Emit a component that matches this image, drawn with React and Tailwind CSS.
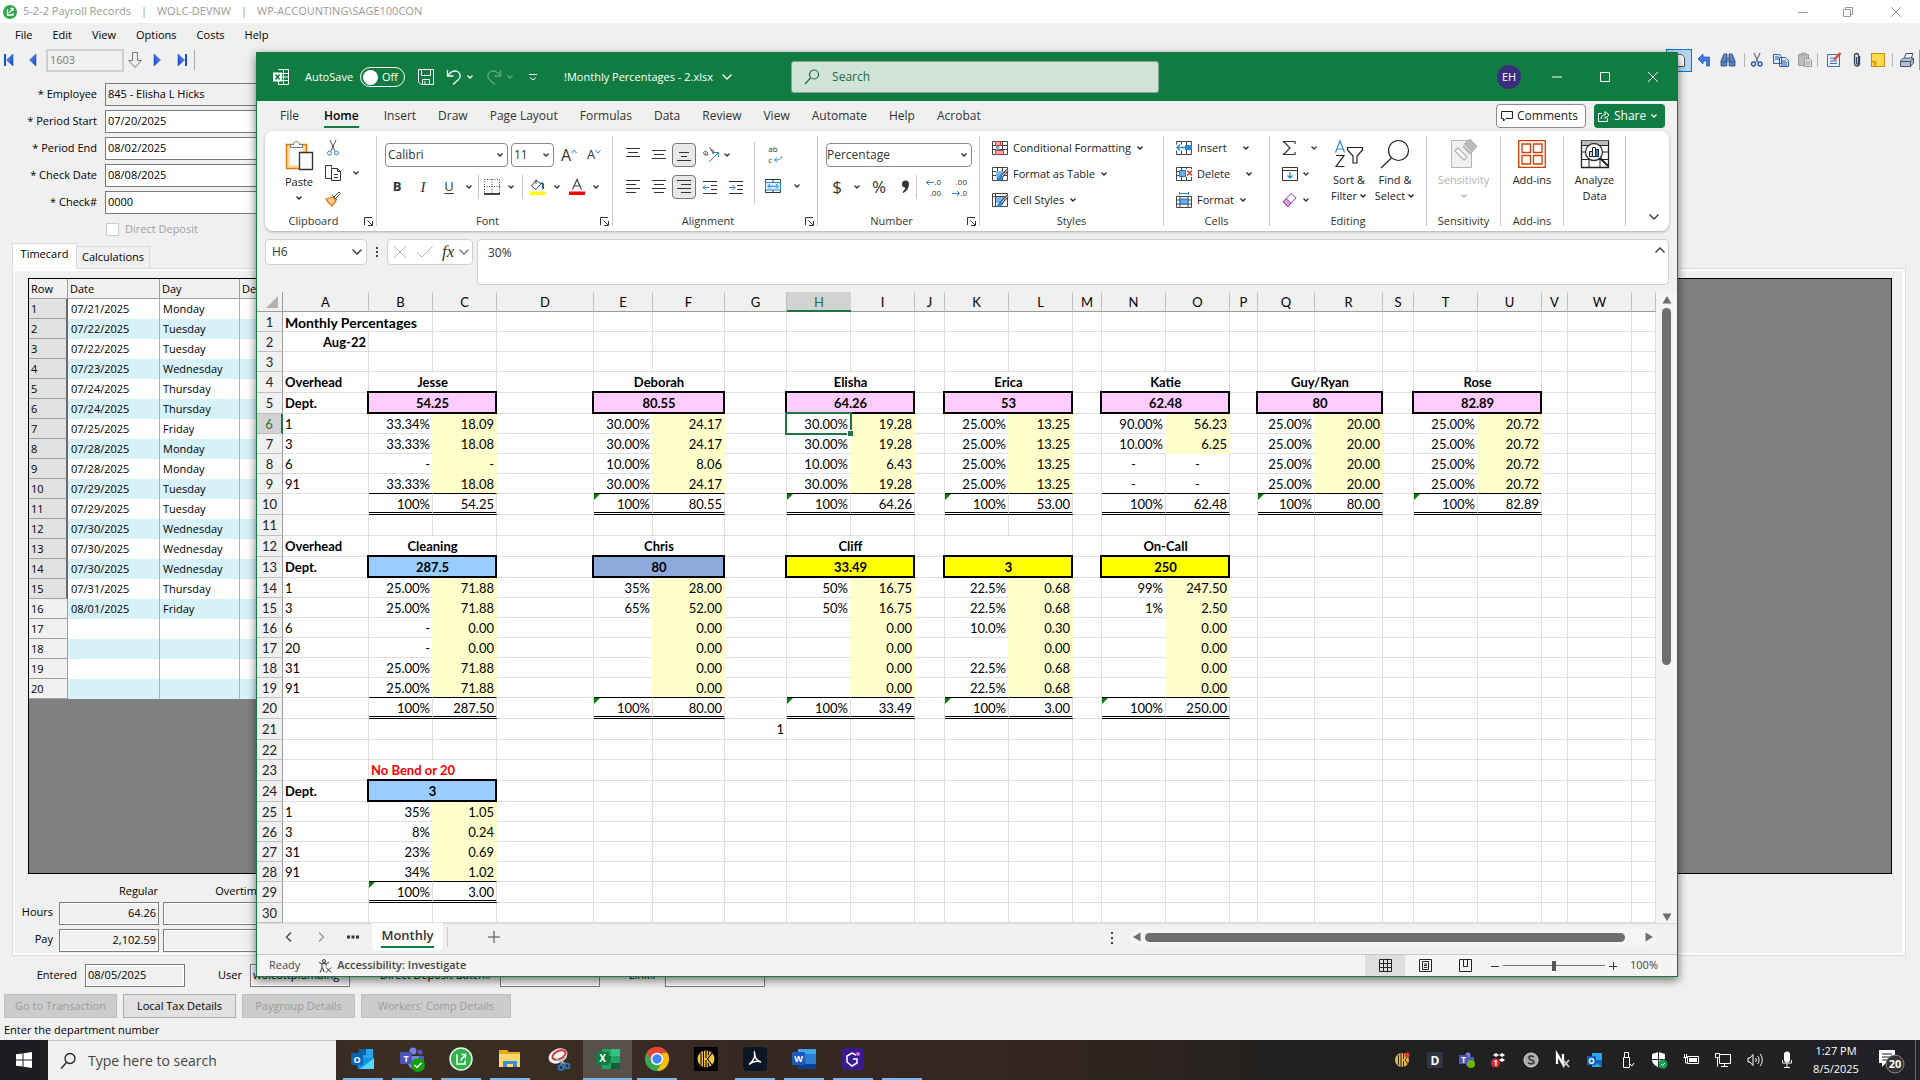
import React from "react";

/* ---------- shared pieces ---------- */

function Svg({ w = 16, h, box, className = "", children, ...rest }) {
  return (
    <svg
      width={w}
      height={h || w}
      viewBox={box || `0 0 ${w} ${h || w}`}
      fill="none"
      stroke="currentColor"
      aria-hidden="true"
      className={"block shrink-0 overflow-visible " + className}
      {...rest}
    >
      {children}
    </svg>
  );
}

const Chev = ({ className = "" }) => (
  <Svg w={8} className={className} strokeWidth="1.3">
    <path d="M1.5 2.5 4 5l2.5-2.5" />
  </Svg>
);

const BigChev = ({ className = "" }) => (
  <Svg w={12} className={className} strokeWidth="1.3">
    <path d="M1.5 3.5 6 8l4.5-4.5" />
  </Svg>
);

function Btn({ label, className = "", children, ...rest }) {
  return (
    <button type="button" aria-label={label} className={"flex shrink-0 items-center justify-center " + className} {...rest}>
      {children}
    </button>
  );
}

function Select({ label, value, className = "", selectClass = "", chev }) {
  return (
    <div className={"relative " + className}>
      <select aria-label={label} defaultValue={value} className={"h-full w-full appearance-none bg-white outline-none " + selectClass}>
        <option>{value}</option>
      </select>
      <span className="pointer-events-none absolute inset-y-0 right-1 flex items-center">{chev || <Chev />}</span>
    </div>
  );
}

/* ---------- payroll window ---------- */

const timecard = [
  ["07/21/2025", "Monday"],
  ["07/22/2025", "Tuesday"],
  ["07/22/2025", "Tuesday"],
  ["07/23/2025", "Wednesday"],
  ["07/24/2025", "Thursday"],
  ["07/24/2025", "Thursday"],
  ["07/25/2025", "Friday"],
  ["07/28/2025", "Monday"],
  ["07/28/2025", "Monday"],
  ["07/29/2025", "Tuesday"],
  ["07/29/2025", "Tuesday"],
  ["07/30/2025", "Wednesday"],
  ["07/30/2025", "Wednesday"],
  ["07/30/2025", "Wednesday"],
  ["07/31/2025", "Thursday"],
  ["08/01/2025", "Friday"],
  ["", ""],
  ["", ""],
  ["", ""],
  ["", ""],
];

const NavArrow = ({ flip, bar }) => (
  <Svg w={12} className={flip ? "-scale-x-100" : ""} stroke="none">
    <defs>
      <linearGradient id="nav" x1="0" x2="1" y1="0" y2="1">
        <stop offset="0" stopColor="#6f9bf5" />
        <stop offset="1" stopColor="#0a3bbf" />
      </linearGradient>
    </defs>
    {bar && <rect x="1" y="0" width="2" height="12" fill="#1c4fd0" />}
    <path d="M10 0v12L3.500 6z" fill="url(#nav)" stroke="#2a5bd8" strokeWidth=".6" />
  </Svg>
);

const ToolSep = () => <span className="mx-1 h-3.5 w-px bg-[#b5b5b5]" />;

function PayrollToolbar() {
  return (
    <div className="flex h-[26px] shrink-0 items-center">
      <Btn label="First record" className="w-[18px]"><NavArrow bar /></Btn>
      <Btn label="Previous record" className="w-7"><NavArrow /></Btn>
      <input aria-label="Record number" readOnly defaultValue="1603" className="h-[23px] w-[78px] border-2 border-[#cfcfcf] bg-[#f0f0f0] px-0.5 pb-0.5 text-[#7d7d7d] outline-none" />
      <Btn label="Go to record" className="w-[22px]">
        <Svg w={16} h={18} className="text-[#777]">
          <path d="M5.500 1.500h5v8h4L8 16.500 1.500 9.500h4z" fill="#eee" />
        </Svg>
      </Btn>
      <Btn label="Next record" className="w-6"><NavArrow flip /></Btn>
      <Btn label="Last record" className="w-6"><NavArrow flip bar /></Btn>
      <span className="h-5 w-px bg-[#a9a9a9]" />
      <div className="ml-auto flex items-center">
        <Btn label="New" className="h-[23px] w-[26px] border border-[#0078d7] bg-[#b5d7f3]">
          <Svg w={16}>
            <path d="M4.500 2.500h6l3 3v9h-9z" fill="#fff" stroke="#555" />
            <path d="M4 1l1 2 2-.5-1 2 1 2-2-.5-1 2-1-2-2 .5 1-2-1-2 2 .5z" fill="#f6c945" stroke="none" />
          </Svg>
        </Btn>
        <Btn label="Undo" className="w-6">
          <Svg w={14} stroke="none"><path d="M1 6 6 1v3h6.500v9H9.500V8H6v3z" fill="#3f7ae0" stroke="#1b4fb5" strokeWidth=".7" /></Svg>
        </Btn>
        <Btn label="Find" className="w-6">
          <Svg w={16} stroke="#24406e" strokeWidth=".8">
            <path d="M4 2h3v4l-.2 8H1V9zM12 2H9v4l.2 8H15V9z" fill="#5a86c9" />
            <path d="M2 10h4M10 10h4M7 6h2v3H7z" fill="#cfe0f7" />
          </Svg>
        </Btn>
        <ToolSep />
        <Btn label="Cut" className="w-4">
          <Svg w={14} strokeWidth="1.4" stroke="#6d7c91"><path d="M4 0l4 9M10 0 6 9" /><circle cx="3.500" cy="11" r="2" stroke="#2557c5" /><circle cx="10" cy="11" r="2" stroke="#2557c5" /></Svg>
        </Btn>
        <Btn label="Copy" className="w-8">
          <Svg w={16} stroke="#2f5fae" strokeWidth="1"><path d="M.5 2.500h6l2 2v7h-8zM6.500 5.500h6l3 3v6h-9z" fill="#dbe9fb" /><path d="M8 9h5M8 11h6M8 13h6M2 5h4M2 7h4" /></Svg>
        </Btn>
        <Btn label="Paste" className="w-4">
          <Svg w={16} stroke="#9a9a9a"><path d="M1.500 2.500h10v11h-10z" fill="#bdbdbd" /><path d="M4.500 1h4v2h-4z" fill="#ccc" /><path d="M7.500 6.500h5l2 2v6h-7z" fill="#ddd" /><path d="M9 10h4M9 12h4" /></Svg>
        </Btn>
        <ToolSep />
        <Btn label="Edit note" className="w-6">
          <Svg w={16} stroke="#3d6cb8"><path d="M1.500 2.500h12v12h-12z" fill="#e9f1fc" /><path d="M4 6h5M4 9h7M4 11.500h7" /><path d="M14.500 1 8 8" stroke="#e34a26" strokeWidth="2.500" /></Svg>
        </Btn>
        <Btn label="Attach" className="w-[22px]">
          <Svg w={10} h={16} stroke="#33435c" strokeWidth="1.300"><path d="M7.500 4v7.500a2.500 2.500 0 0 1-5 0V3.500a2 2 0 0 1 4 0V11a1 1 0 0 1-2 0V5" /></Svg>
        </Btn>
        <Btn label="Note" className="w-5">
          <Svg w={14}><rect x=".5" y=".5" width="13" height="13" fill="#fbd94b" stroke="#c58f10" /><path d="M1 8l4 1-1 4" stroke="#c58f10" fill="#e8a91b" /></Svg>
        </Btn>
        <ToolSep />
        <Btn label="Print" className="w-5">
          <Svg w={16} stroke="#44536b"><path d="M5 7 7 1.500h7L12 7" fill="#fff" /><path d="M1.500 9l3-3h10v5l-3 3.500h-10z" fill="#b4c2d9" /><path d="M1.500 9.500h10v5M11.500 9.500l3-3" /></Svg>
        </Btn>
        <span className="ml-0.5 h-5 w-px bg-[#9a9a9a]" />
      </div>
    </div>
  );
}

function Field({ id, label, value, readOnly }) {
  return (
    <div className="flex h-[27px] items-start">
      <label htmlFor={id} className="w-[97px] pt-0.5 text-right leading-[18px]">{label}</label>
      <input
        id={id}
        defaultValue={value}
        readOnly={readOnly}
        className={"ml-2 h-[23px] w-[320px] border border-[#7a7a7a] px-0.5 pb-0.5 outline-none " + (readOnly ? "bg-[#f0f0f0]" : "bg-white")}
      />
    </div>
  );
}

const GrayBox = ({ label, id, value = "", className = "" }) => (
  <input id={id} aria-label={label} readOnly defaultValue={value} className={"h-[23px] w-[100px] shrink-0 border border-[#7a7a7a] bg-[#f0f0f0] px-0.5 pb-0.5 outline-none ring-1 ring-inset ring-white " + className} />
);

function PayrollWindow() {
  return (
    <section className="flex min-h-0 flex-1 flex-col overflow-hidden bg-[#f0f0f0] text-[11px] text-black">
      <header className="flex h-[23px] shrink-0 items-center bg-white text-[#999]">
        <Svg w={14} className="ml-[3px] mr-1.5" stroke="#fff" strokeWidth="1.300">
          <circle cx="7" cy="7" r="7" fill="#2fa64b" stroke="none" />
          <path d="M4.500 4v6h5.500V8M6 8l4-4M7.500 3.500H10V6" />
        </Svg>
        <h1 className="flex flex-1 gap-2.5 text-[11px]">
          <span>5-2-2 Payroll Records</span>
          <span>|</span>
          <span>WOLC-DEVNW</span>
          <span>|</span>
          <span>WP-ACCOUNTING\SAGE100CON</span>
        </h1>
        <Btn label="Minimize" className="w-[45px]"><Svg w={10}><path d="M0 5.500h10" /></Svg></Btn>
        <Btn label="Restore" className="w-[46px]"><Svg w={10}><path d="M.5 2.500h7v7h-7zM2.500 2.500v-2h7v7h-2" /></Svg></Btn>
        <Btn label="Close" className="w-[49px]"><Svg w={10}><path d="M0 0l10 10M10 0 0 10" /></Svg></Btn>
      </header>
      <nav className="flex h-6 shrink-0 items-center gap-5 pl-[15px] text-[11px]">
        {["File", "Edit", "View", "Options", "Costs", "Help"].map((m) => (
          <button type="button" key={m}>{m}</button>
        ))}
      </nav>
      <PayrollToolbar />
      <div className="pt-2.5">
        <Field id="emp" label="* Employee" value="845 - Elisha L Hicks" readOnly />
        <Field id="ps" label="* Period Start" value="07/20/2025" />
        <Field id="pe" label="* Period End" value="08/02/2025" />
        <Field id="cd" label="* Check Date" value="08/08/2025" />
        <Field id="cn" label="* Check#" value="0000" />
        <label className="ml-[106px] flex h-5 items-center gap-1.5 pt-0.5 text-[#a0a0a0]">
          <input type="checkbox" disabled className="size-[13px] appearance-none border border-[#ccc] bg-white" />
          Direct Deposit
        </label>
      </div>
      <div className="flex h-[30px] shrink-0 items-end pt-1 pl-3" role="tablist">
        <button type="button" role="tab" className="z-10 -mb-px h-[26px] w-[65px] border border-b-0 border-[#dadada] bg-white pb-1">Timecard</button>
        <button type="button" role="tab" className="h-[22px] w-[73px] border border-b-0 border-l-0 border-[#dadada]">Calculations</button>
      </div>
      <div className="mr-[14px] ml-3 flex min-h-0 flex-1 flex-col border border-[#dadada] bg-white p-0.5">
        <div className="flex min-h-0 flex-1 flex-col bg-[#f0f0f0] pt-[7px] pr-[11px] pl-[13px]">
          <div className="min-h-0 flex-1 overflow-hidden border border-black bg-[#808080]">
            <table className="w-[600px] table-fixed border-separate border-spacing-0 text-left">
              <colgroup>
                <col className="w-[39px]" />
                <col className="w-[92px]" />
                <col className="w-[80px]" />
                <col />
              </colgroup>
              <thead>
                <tr className="h-5 bg-[#f0f0f0]">
                  {["Row", "Date", "Day", "Dept"].map((h) => (
                    <th key={h} className="border-r border-b border-[#a0a0a0] px-0.5 py-0 leading-[18px] font-normal">{h}</th>
                  ))}
                </tr>
              </thead>
              <tbody>
                {timecard.map(([date, day], i) => (
                  <tr key={i} className={"h-5 " + (i % 2 ? "bg-[#d7f1f9]" : "bg-white")}>
                    <th className={"border-b border-[#a0a0a0] px-0.5 py-0 leading-[18px] font-normal " + (i < 15 ? "border-r-2 border-r-[#696969] bg-[#e1e1e1]" : "border-r bg-[#f0f0f0]")}>{i + 1}</th>
                    <td className="border-r border-[#b0b0b0] px-[3px] py-0 leading-5">{date}</td>
                    <td className="border-r border-[#b0b0b0] px-[3px] py-0 leading-5">{day}</td>
                    <td />
                  </tr>
                ))}
              </tbody>
            </table>
          </div>
          <div className="flex h-7 items-center">
            <span className="w-[130px] pt-1.5 text-right">Regular</span>
            <span className="w-[105px] pt-1.5 text-right">Overtime</span>
          </div>
          {[["Hours", "64.26", "h-[27px]"], ["Pay", "2,102.59", "h-6"]].map(([l, v, h]) => (
            <div key={l} className={"flex items-start " + h}>
              <label htmlFor={l} className="-ml-3 w-[37px] pt-0.5 text-right">{l}</label>
              <GrayBox id={l} value={v} className="mr-1 ml-1.5 text-right" />
              <GrayBox label={l + " overtime"} />
            </div>
          ))}
        </div>
      </div>
      <div className="flex h-[38px] shrink-0 items-center">
        <label htmlFor="ent" className="w-[77px] text-right">Entered</label>
        <GrayBox id="ent" value="08/05/2025" className="ml-2" />
        <label htmlFor="usr" className="w-[57px] text-right">User</label>
        <GrayBox id="usr" value="wolcottplumbing" className="ml-2" />
        <label htmlFor="ddb" className="w-[142px] text-right">Direct Deposit Batch#</label>
        <GrayBox id="ddb" className="ml-2" />
        <label htmlFor="lnk" className="w-[57px] text-right">Link#</label>
        <GrayBox id="lnk" className="ml-2" />
      </div>
      <div className="flex shrink-0 gap-1.5 pl-1">
        <button type="button" disabled className="h-6 w-[113px] border border-[#bfbfbf] bg-[#ccc] text-[#9a9a9a]">Go to Transaction</button>
        <button type="button" className="h-6 w-[113px] border border-[#adadad] bg-[#e1e1e1]">Local Tax Details</button>
        <button type="button" disabled className="h-6 w-[113px] border border-[#bfbfbf] bg-[#ccc] text-[#9a9a9a]">Paygroup Details</button>
        <button type="button" disabled className="h-6 w-[150px] border border-[#bfbfbf] bg-[#ccc] text-[#9a9a9a]">Workers' Comp Details</button>
      </div>
      <p className="h-[22px] shrink-0 pt-1 pl-1">Enter the department number</p>
    </section>
  );
}

/* ---------- Excel: title bar and tabs ---------- */

function ExcelTitle() {
  return (
    <header className="flex h-[49px] shrink-0 items-center bg-[#107c41] pt-px text-[11px] text-white">
      <Svg w={16} className="ml-4">
        <path d="M5.500 1V.5h10v15h-10V12M5.500 4.500h10M5.500 8h10M5.500 11.500h10M10.500 .5v15" />
        <rect x="0" y="3.500" width="9" height="9" fill="#fff" stroke="none" />
        <path d="M2.500 5.500l4 5M6.500 5.500l-4 5" stroke="#107c41" strokeWidth="1.500" />
      </Svg>
      <label className="ml-4 flex items-center gap-[7px]">
        AutoSave
        <span className="flex h-5 w-[45px] items-center gap-1 rounded-full border border-white pl-0.5">
          <input type="checkbox" role="switch" className="size-[15px] appearance-none rounded-full bg-white" />
          Off
        </span>
      </label>
      <Btn label="Save" className="ml-[13px]">
        <Svg w={16}><path d="M.5 .5h15v15H3l-2.500-2.500zM3.500 .5v6h9v-6M4.500 15.500v-5h7v5M7 12v3" /></Svg>
      </Btn>
      <Btn label="Undo" className="ml-3">
        <Svg w={16} strokeWidth="1.300"><path d="M1.500 1v6h6M1.800 6.700C4 3 8 1 11.500 2.500c3.500 1.800 3.500 6 .5 8.500l-5 4.500" /></Svg>
      </Btn>
      <Chev className="ml-1" />
      <Btn label="Redo" className="ml-3 text-[#5fa983]">
        <Svg w={16} strokeWidth="1.300"><path d="M14.500 1v6h-6M14.200 6.700C12 3 8 1 4.500 2.500 1 4.300 1 8.500 4 11l5 4.500" /></Svg>
      </Btn>
      <Chev className="ml-1 text-[#5fa983]" />
      <Btn label="Customize toolbar" className="ml-3.5">
        <Svg w={10}><path d="M1 2.500h8M2 5.500l3 2.500 3-2.500" /></Svg>
      </Btn>
      <span className="ml-[26px] w-[157px] text-[11px]">!Monthly Percentages - 2.xlsx</span>
      <BigChev />
      <label className="ml-[58px] flex h-8 w-[368px] shrink-0 items-center rounded-[3px] border border-[#87a592] bg-[#cfe3d8] pl-3 text-[#1c6b41]">
        <Svg w={16} strokeWidth="1.200"><circle cx="10" cy="5.500" r="4.500" /><path d="M6.500 9 1 15" /></Svg>
        <input placeholder="Search" aria-label="Search" className="ml-3 w-full bg-transparent text-[12px] outline-none placeholder:text-[#1c6b41]" />
      </label>
      <button type="button" className="ml-auto size-6 rounded-full bg-[#3b2e7e] text-[11px]">EH</button>
      <Btn label="Minimize" className="ml-3 w-12"><Svg w={10}><path d="M0 5h10" /></Svg></Btn>
      <Btn label="Maximize" className="w-12"><Svg w={10}><path d="M.5 .5h9v9h-9z" /></Svg></Btn>
      <Btn label="Close" className="w-12"><Svg w={10}><path d="M0 0l10 10M10 0 0 10" /></Svg></Btn>
    </header>
  );
}

const tabs = ["File", "Home", "Insert", "Draw", "Page Layout", "Formulas", "Data", "Review", "View", "Automate", "Help", "Acrobat"];

function ExcelTabs() {
  return (
    <nav className="flex h-[30px] shrink-0 items-end px-3 pb-[3px] text-[12px] text-[#333]">
      {tabs.map((t) => (
        <button
          type="button"
          key={t}
          className={"h-6 shrink-0 border-b-2 pt-0.5 leading-5 " + (t === "Home" ? "mx-[14px] border-[#107c41] font-semibold text-black" : "mx-[11px] border-transparent")}
        >
          {t}
        </button>
      ))}
      <button type="button" className="ml-auto flex h-6 w-[90px] items-center gap-1 rounded-[4px] border border-[#8a8a8a] bg-white pl-1 text-[#222]">
        <Svg w={12}><path d="M.5 1.500h11v7H5l-2.500 2.500V8.500h-2z" /></Svg>
        Comments
      </button>
      <button type="button" className="ml-2 flex h-6 w-[71px] items-center gap-1 rounded-[4px] bg-[#107c41] pl-1 text-white">
        <Svg w={12}><path d="M4 3.500H.5v8h9V8M3 9c0-3 2-4.500 5-4.500M7 1.500l4 3.500-4 3.500V6.500M7 1.500v3" /></Svg>
        Share
        <Chev />
      </button>
    </nav>
  );
}

/* ---------- Excel: ribbon ---------- */

function Group({ label, launcher, className = "", children }) {
  return (
    <div className={"my-[5px] flex shrink-0 flex-col border-r border-[#c8c8c8] " + className}>
      <div className="flex-1">{children}</div>
      <div className="-mb-0.5 flex h-3.5 items-center text-[11px] leading-[14px]">
        <span className="flex-1 text-center">{label}</span>
        {launcher && (
          <Btn label={label + " settings"} className="mr-0.5 w-3">
            <Svg w={9}><path d="M.5 8V.5H8M3.500 3.500 8 8M8.500 4v4.500H4" /></Svg>
          </Btn>
        )}
      </div>
    </div>
  );
}

const Lines = ({ rows, y = 2, gap = 4 }) => (
  <Svg w={16}>
    {rows.map(([a, b], i) => (
      <path key={i} d={`M${a} ${y + i * gap - 0.5}H${b}`} />
    ))}
  </Svg>
);

const FULL = [1, 15];

function GridIcon({ children, frame = true }) {
  return (
    <Svg w={16}>
      {frame && <path d="M.5 1.500h15v13H.5zM.5 5.500h15M.5 9.500h15M5.500 1.500v13M10.500 1.500v13" stroke="#444" />}
      {children}
    </Svg>
  );
}

const Brush = () => (
  <>
    <path d="M4 5h8v6H4z" fill="#7cb5e8" stroke="none" />
    <path d="M15.500 4 9 11" stroke="#444" strokeWidth="3" />
    <path d="M15.500 4 9.500 10.500" stroke="#fff" strokeWidth="1" />
    <path d="M9 9c-3 0-2 4-5 5 3 2 7 0 7-3z" fill="#2b88d8" stroke="none" />
  </>
);

function RowCmd({ icon, children }) {
  return (
    <button type="button" className="flex h-[26px] w-full items-center gap-[5px] text-[11px] whitespace-nowrap text-[#222]">
      {icon}
      {children}
    </button>
  );
}

function Ribbon() {
  return (
    <div className="mx-2 flex h-[100px] shrink-0 rounded-lg bg-white text-[#333] shadow-[0_1px_3px_rgba(0,0,0,0.3)]">
      <Group label="Clipboard" launcher className="w-[112px]">
        <div className="flex">
          <button type="button" className="ml-4 flex w-9 flex-col items-center pt-1 text-[11px] text-[#222]">
            <Svg w={28} h={30}>
              <path d="M1.500 4.500h20v24h-20z" fill="#fbdc9a" stroke="#e07b11" strokeWidth="1.500" />
              <path d="M5 7h13v18H5z" fill="#fafafa" stroke="none" />
              <path d="M5.500 7.500v-3h3c0-4 6-4 6 0h3v3z" fill="#fff" stroke="#777" />
              <path d="M14.500 12.500h13v17h-13z" fill="#fafafa" stroke="#333" strokeWidth="1.300" />
            </Svg>
            <span className="leading-6">Paste</span>
            <Chev />
          </button>
          <div className="ml-2 flex flex-col">
            <Btn label="Cut" className="h-6 w-4">
              <Svg w={12} h={16}><path d="M3 0l5 11M9 0 4 11" stroke="#555" /><circle cx="2.500" cy="13" r="2" stroke="#2b88d8" /><circle cx="9.500" cy="13" r="2" stroke="#2b88d8" /></Svg>
            </Btn>
            <Btn label="Copy" className="h-[26px] w-4">
              <Svg w={16}><path d="M6 13.500H.5V.5h6v2M6.500 3.500h6l3 3v9h-9zM12.500 3.500v3h3M9 9.500h4M9 12.500h4" /></Svg>
            </Btn>
            <Btn label="Format painter" className="h-[26px] w-4">
              <Svg w={16}><path d="M1 8l7-2 3 4-4 5C5 13 2 11 1 8z" fill="#f9c98f" stroke="#e07b11" strokeWidth="1.300" /><path d="M7 4l5 5M9 6l5-5 1.500 1.500-5 5" fill="#fff" stroke="#444" /></Svg>
            </Btn>
          </div>
          <Chev className="mt-[33px] ml-[11px]" />
        </div>
      </Group>

      <Group label="Font" launcher className="w-[236px]">
        <div className="mt-[7px] ml-2 flex h-6 items-center">
          <Select label="Font name" value="Calibri" className="h-6 w-[123px] text-[12px]" selectClass="rounded-[4px] border border-[#8a8a8a] pl-0.5" />
          <Select label="Font size" value="11" className="ml-[3px] h-6 w-[43px] text-[12px]" selectClass="rounded-[4px] border border-[#8a8a8a] pl-0.5" />
          <Btn label="Grow font" className="ml-1.5 w-[18px] text-[16px]">A<Svg w={6} h={14} className="text-[#2b88d8]"><path d="M.5 5 3 2l2.500 3" /></Svg></Btn>
          <Btn label="Shrink font" className="ml-2 w-4 text-[13px]">A<Svg w={6} h={14} className="text-[#2b88d8]"><path d="M.5 2 3 5l2.500-3" /></Svg></Btn>
        </div>
        <div className="mt-2 flex h-6 items-center pl-2">
          <Btn label="Bold" className="w-6 text-[13px] font-bold">B</Btn>
          <Btn label="Italic" className="w-7 font-['Liberation_Serif'] text-[15px] italic">I</Btn>
          <Btn label="Underline" className="w-6 text-[13px] underline underline-offset-2">U</Btn>
          <Chev className="ml-1" />
          <span className="mx-[5px] h-6 w-px bg-[#c8c8c8]" />
          <Btn label="Borders">
            <Svg w={16}><path d="M.5 .5h15v14H.5zM8 0v15M0 7.500h16" stroke="#444" strokeDasharray="1 1.500" /><path d="M0 15h16" stroke="#111" strokeWidth="1.500" /></Svg>
          </Btn>
          <Chev className="ml-[7px]" />
          <span className="mx-[7px] h-6 w-px bg-[#c8c8c8]" />
          <Btn label="Fill color">
            <Svg w={16}><path d="M6 1 1.500 7 6 10.500 11 5zM6 1v4" stroke="#444" /><path d="M11 4c3 0 2 3 2 6" stroke="#1c5fa8" strokeWidth="2" /><path d="M0 12.500h16v3.500H0z" fill="#ff0" stroke="none" /></Svg>
          </Btn>
          <Chev className="ml-[7px]" />
          <Btn label="Font color" className="ml-2">
            <Svg w={16}><path d="M3.500 10.500 8 .5l4.500 10M5 7h6" stroke="#444" strokeWidth="1.200" /><path d="M0 12.500h16v3.500H0z" fill="#f00" stroke="none" /></Svg>
          </Btn>
          <Chev className="ml-[7px]" />
        </div>
      </Group>

      <Group label="Alignment" launcher className="w-[205px]">
        <div className="flex">
          <div className="ml-[7px]">
            <div className="mt-[7px] flex h-6 items-center">
              <Btn label="Top align" className="h-6 w-[26px]"><Lines rows={[FULL, [3, 13], FULL]} y={2} /></Btn>
              <Btn label="Middle align" className="h-6 w-[26px]"><Lines rows={[FULL, [3, 13], FULL]} y={4} /></Btn>
              <Btn label="Bottom align" className="h-6 w-6 rounded-[4px] border border-[#777] bg-[#e8e8e8]"><Lines rows={[[3, 13], [5, 11], FULL]} y={6} /></Btn>
              <Btn label="Orientation" className="ml-[7px]">
                <Svg w={16}>
                  <path d="M2.500 8.500c-2-1-2.500-3-1-4s3 .5 3.500 3M3 5.500c-1.500 1.500 0 3.500 2 2M6.500 .5l4 6M8 3.500c2-1.500 4 1 1.500 3" stroke="#444" />
                  <path d="M6 15 15 6M11 5.500h4.500V10" stroke="#2b88d8" />
                </Svg>
              </Btn>
              <Chev className="ml-1" />
            </div>
            <div className="mt-2 flex h-6 items-center">
              <Btn label="Align left" className="h-6 w-[26px]"><Lines rows={[FULL, [1, 11], FULL, [1, 11]]} /></Btn>
              <Btn label="Center" className="h-6 w-[26px]"><Lines rows={[FULL, [3, 13], FULL, [3, 13]]} /></Btn>
              <Btn label="Align right" className="h-6 w-6 rounded-[4px] border border-[#777] bg-[#e8e8e8]"><Lines rows={[FULL, [5, 15], FULL, [5, 15]]} /></Btn>
              <Btn label="Decrease indent" className="h-6 w-7"><Svg w={16}><path d="M1 2.500h14M9 6.500h6M9 10.500h6M1 14.500h14" /><path d="M7 8.500H1M3.500 6 1 8.500 3.500 11" stroke="#2b88d8" /></Svg></Btn>
              <Btn label="Increase indent" className="h-6 w-6"><Svg w={16}><path d="M1 2.500h14M9 6.500h6M9 10.500h6M1 14.500h14" /><path d="M1 8.500h6M4.500 6 7 8.500 4.500 11" stroke="#2b88d8" /></Svg></Btn>
            </div>
          </div>
          <div className="mt-1.5 ml-1.5 h-[62px] border-l border-[#c8c8c8] pl-2.5">
            <Btn label="Wrap text" className="h-6 w-5 text-[8px]">
              <span className="flex flex-col items-start leading-[11px]"><span>ab</span><span>c</span></span>
              <Svg w={8} h={10} stroke="#2b88d8" className="-ml-1 self-end"><path d="M7.500 0c0 4-3 4-7 4M3 1.500 .5 4 3 6.500" /></Svg>
            </Btn>
            <div className="mt-2 flex h-6 items-center">
              <Btn label="Merge"><Svg w={16}><path d="M.5 1.500h15v13H.5zM8 1.500v3M8 12v2.500" /><path d="M.5 4.500h15v7.500H.5z" fill="#d6eafb" stroke="#2b88d8" /><path d="M3 8.300h10M5 6 2.800 8.300 5 10.500M11 6l2.200 2.300L11 10.500" stroke="#2b88d8" /></Svg></Btn>
              <Chev className="ml-3" />
            </div>
          </div>
        </div>
      </Group>

      <Group label="Number" launcher className="w-[162px]">
        <Select label="Number format" value="Percentage" className="mt-[7px] ml-2 h-6 w-[146px] text-[12px]" selectClass="rounded-[4px] border border-[#8a8a8a] pl-0" />
        <div className="mt-2 flex h-6 items-center pl-[7px]">
          <Btn label="Currency" className="w-6 text-[17px]">$</Btn>
          <Chev className="ml-1" />
          <Btn label="Percent" className="ml-2 w-5 text-[17px]">%</Btn>
          <Btn label="Comma" className="ml-3"><Svg w={9} h={14}><path d="M1 4a3.500 3.500 0 1 1 7 0c0 4-2 7-5.500 9l-1-1c1.500-1.200 2.500-2.500 2.700-4.500A3.300 3.300 0 0 1 1 4z" fill="#333" stroke="none" /></Svg></Btn>
          <span className="mx-1.5 h-6 w-px bg-[#c8c8c8]" />
          <Btn label="Increase decimal" className="w-[18px] flex-col text-[8px] leading-[11px]">
            <span className="flex w-full items-center justify-end"><Svg w={8} stroke="#2b88d8"><path d="M8 4.500H.5M3 2 .5 4.500 3 7" /></Svg>.0</span>
            <span className="w-full text-right">.00</span>
          </Btn>
          <Btn label="Decrease decimal" className="ml-2 w-[18px] flex-col text-[8px] leading-[11px]">
            <span className="w-full text-right">.00</span>
            <span className="flex w-full items-center justify-end"><Svg w={8} stroke="#2b88d8"><path d="M0 4.500h7.500M5 2l2.500 2.500L5 7" /></Svg>.0</span>
          </Btn>
        </div>
      </Group>

      <Group label="Styles" className="w-[184px]">
        <div className="-mt-px pl-3">
          <RowCmd icon={<GridIcon><path d="M3.500 1.500h5v4h-5zM3.500 10.500h8v4h-8z" fill="#f8a5a5" stroke="#e0303a" /><path d="M4 6h3v4H4z" fill="#6aaee8" stroke="none" /></GridIcon>}>Conditional Formatting <Chev /></RowCmd>
          <RowCmd icon={<GridIcon><Brush /></GridIcon>}>Format as Table <Chev /></RowCmd>
          <RowCmd icon={<Svg w={16}><path d="M.5 1.500h15v13H.5zM.5 4.500h15M3.500 1.500v13" stroke="#444" /><Brush /></Svg>}>Cell Styles <Chev /></RowCmd>
        </div>
      </Group>

      <Group label="Cells" className="w-[106px]">
        <div className="-mt-px pl-3">
          <RowCmd icon={<GridIcon><path d="M6 5h10v5H6z" fill="#2b88d8" stroke="none" /><path d="M0 4.500h9v6H0z" fill="#fff" stroke="none" /><path d="M9 7.500H1M4 4.500l-3 3 3 3" stroke="#2b88d8" strokeWidth="1.300" /></GridIcon>}>Insert <Chev className="ml-2.5" /></RowCmd>
          <RowCmd icon={<GridIcon><path d="M3.500 4.500h6v6h-6z" fill="#6aaee8" stroke="#1c6fc0" /><path d="M10 3h6v8h-6z" fill="#fff" stroke="none" /><path d="M11 4.500l5 5M16 4.500l-5 5" stroke="#e0303a" strokeWidth="1.300" /></GridIcon>}>Delete <Chev className="ml-2.5" /></RowCmd>
          <RowCmd icon={<Svg w={16}><path d="M.5 4.500h15v11H.5zM.5 8h15M.5 12h15M4 4v12M12 4v12" stroke="#444" /><path d="M4 7h8v5H4z" fill="#6aaee8" stroke="#1c6fc0" /><path d="M3.500 0v3M12.500 0v3M3.500 1.500h9" stroke="#2b88d8" /></Svg>}>Format <Chev /></RowCmd>
        </div>
      </Group>

      <Group label="Editing" className="w-[157px]">
        <div className="flex">
          <div className="-mt-px ml-3 w-[38px]">
            <Btn label="AutoSum" className="h-[26px] gap-3.5"><Svg w={14} h={16} strokeWidth="1.200"><path d="M13 4V1.500H1.500L8 8l-6.500 6.500H13V12" /></Svg><Chev /></Btn>
            <Btn label="Fill" className="h-[26px] gap-1"><Svg w={16}><path d="M.5 1.500h15v13H.5zM.5 4.500h15" /><path d="M8 6v6M5.500 9.500 8 12l2.500-2.500" stroke="#2b88d8" strokeWidth="1.300" /></Svg><Chev /></Btn>
            <Btn label="Clear" className="h-[26px] gap-1"><Svg w={16} stroke="#9b3fb0"><path d="M1 10 9 1.500l5 4.500-8 8.500z" fill="#fff" /><path d="M1 10l3-3.500 5 4.500-3 3.500z" fill="#d9a0e3" /></Svg><Chev /></Btn>
          </div>
          <button type="button" className="mt-1 ml-[9px] flex w-10 flex-col items-center text-[11px] leading-4 text-[#222]">
            <Svg w={30} h={28} strokeWidth="1.200"><path d="M1.500 12.500 6 1l4.500 11.500M3 9h6" stroke="#2b88d8" /><path d="M2 15.500h8L2 26.500h8.500" /><path d="M13.500 7.500h15v2.500L23 16v7h-4v-7l-5.500-6z" /></Svg>
            <span className="mt-1">Sort &amp;</span>
            <span className="flex items-center gap-0.5">Filter <Chev /></span>
          </button>
          <button type="button" className="mt-1 ml-[5px] flex w-[42px] flex-col items-center text-[11px] leading-4 text-[#222]">
            <Svg w={30} h={28} strokeWidth="1.200"><circle cx="18.500" cy="10.500" r="10" /><path d="M11.500 18 1 28" /></Svg>
            <span className="mt-1">Find &amp;</span>
            <span className="flex items-center gap-0.5">Select <Chev /></span>
          </button>
        </div>
      </Group>

      <Group label="Sensitivity" className="w-[74px]">
        <button type="button" disabled className="mx-auto mt-0.5 flex flex-col items-center text-[11px] leading-4 text-[#b4b4b4]">
          <Svg w={28} h={30}><path d="M1.500 2.500h20v27h-20z" fill="#f0f0f0" /><path d="M5 13l9 9 3-3-9-9z" fill="#fff" strokeWidth="1.300" /><path d="M14 6l6-5 7 7-5 6z" fill="#bbb" /><path d="M13 8l8 8" strokeWidth="2" /></Svg>
          <span className="mt-1">Sensitivity</span>
          <Chev className="mt-1" />
        </button>
      </Group>

      <Group label="Add-ins" className="w-[63px]">
        <button type="button" className="mx-auto mt-1 flex flex-col items-center text-[11px] leading-4 text-[#222]">
          <Svg w={28} stroke="#d83b01" strokeWidth="1.300"><path d="M.7 .7h26.600v26.600H.7zM4 4h8.500v8.500H4zM15.500 4H24v8.500h-8.500zM4 15.500h8.500V24H4zM15.500 15.500H24V24h-8.500z" /></Svg>
          <span className="mt-1">Add-ins</span>
        </button>
      </Group>

      <Group label="" className="w-[62px]">
        <button type="button" className="mx-auto mt-1 flex flex-col items-center text-[11px] leading-4 text-[#222]">
          <Svg w={28}>
            <path d="M.5 1h27v26.500H.5z" strokeWidth="1.300" /><path d="M1 1h26v4H1z" fill="#bbb" stroke="none" /><path d="M.5 5.500h27M.5 12h27M.5 19.500h27M8 5v22M19 5v22" />
            <circle cx="13" cy="12" r="8.500" fill="#fff" stroke="#333" strokeWidth="1.300" /><path d="M19 18l8 8" strokeWidth="2" />
            <path d="M8.500 11.500h3v5h-3z" fill="#ccc" /><path d="M11.500 7.500h3v9h-3z" fill="#fff" /><path d="M14.500 9.500h3v7h-3z" fill="#2b88d8" />
          </Svg>
          <span className="mt-1">Analyze</span>
          <span>Data</span>
        </button>
      </Group>
      <Btn label="Ribbon display options" className="mt-auto mr-[9px] mb-2 ml-auto"><BigChev /></Btn>
    </div>
  );
}

function FormulaBar() {
  return (
    <div className="mx-2 mt-2 flex h-[53px] shrink-0 items-start text-[12px] text-[#333]">
      <Select label="Name box" value="H6" className="h-[26px] w-[102px]" selectClass="rounded-[4px] border border-[#d0d0d0] pl-1.5" chev={<BigChev />} />
      <Svg w={4} h={26} className="mx-2" stroke="none" fill="#444"><path d="M1 8h2v2H1zM1 12h2v2H1zM1 16h2v2H1z" /></Svg>
      <div className="flex h-[26px] w-[86px] items-center rounded-[4px] border border-[#d0d0d0] bg-white pl-1.5 text-[#b5b5b5]">
        <Btn label="Cancel"><Svg w={12}><path d="M0 0l12 12M12 0 0 12" /></Svg></Btn>
        <Btn label="Enter" className="ml-[11px]"><Svg w={16} h={12}><path d="M.5 6.500 5 11 15.500 .5" /></Svg></Btn>
        <Btn label="Insert function" className="ml-[9px] font-['Liberation_Serif'] text-[17px] text-[#333] italic">fx</Btn>
        <BigChev className="ml-1 text-[#777]" />
      </div>
      <div className="ml-1 flex h-[46px] flex-1 items-start rounded-[4px] border border-[#d0d0d0] bg-white">
        <input aria-label="Formula" defaultValue="30%" className="h-6 flex-1 bg-transparent pl-2.5 outline-none" />
        <Btn label="Collapse formula bar" className="mt-1 mr-0.5"><BigChev className="rotate-180" /></Btn>
      </div>
    </div>
  );
}

/* ---------- Excel: sheet ---------- */

const columns = [
  ["A", "w-[86px]"], ["B", "w-[64px]"], ["C", "w-[64px]"], ["D", "w-[97px]"], ["E", "w-[59px]"], ["F", "w-[72px]"],
  ["G", "w-[62px]"], ["H", "w-[64px]"], ["I", "w-[64px]"], ["J", "w-[30px]"], ["K", "w-[64px]"], ["L", "w-[64px]"],
  ["M", "w-[29px]"], ["N", "w-[64px]"], ["O", "w-[64px]"], ["P", "w-[28px]"], ["Q", "w-[57px]"], ["R", "w-[68px]"],
  ["S", "w-[31px]"], ["T", "w-[64px]"], ["U", "w-[64px]"], ["V", "w-[26px]"], ["W", "w-[64px]"], ["", ""],
];
const letters = columns.map(([c], i) => c || "X" + i);
const tallRows = [4, 5, 10, 11, 12, 13, 20, 21, 23, 24, 29];

const cells = {
  A1: { v: "Monthly Percentages", bold: true, span: 2, align: "text-left text-[14px]" },
  A2: { v: "Aug-22", bold: true },
  G21: { v: "1" },
};

function labels(start, list) {
  list.forEach((v, i) => {
    cells["A" + (start + i)] = { v, align: "text-left", bold: Number.isNaN(Number(v)) };
  });
}
labels(4, ["Overhead", "Dept.", "1", "3", "6", "91"]);
labels(12, ["Overhead", "Dept.", "1", "3", "6", "20", "31", "91"]);
labels(24, ["Dept.", "1", "3", "31", "91"]);

function block(a, b, row, name, total, fill, rows, sum, { mark = true, nameClass = "", plainFrom = 99 } = {}) {
  cells[a + row] = { v: name, bold: true, span: 2, align: nameClass || "text-center" };
  cells[a + (row + 1)] = { v: total, bold: true, span: 2, align: "text-center", fill, frame: true };
  rows.forEach(([p, v], i) => {
    const last = i === rows.length - 1;
    const plain = i >= plainFrom;
    cells[a + (row + 2 + i)] = { v: p, last, beforeFill: !plain, align: plain ? "text-center" : undefined };
    cells[b + (row + 2 + i)] = { v, last, yellow: !plain, align: plain ? "text-center" : undefined };
  });
  const end = row + 2 + rows.length;
  cells[a + end] = { v: "100%", total: true, mark };
  cells[b + end] = { v: sum, total: true };
}

const PINK = "bg-[#ffccff]";
const BLUE = "bg-[#99ccff]";
const YELLOW = "bg-[#ffff00]";
const Q = "25.00%";

block("B", "C", 4, "Jesse", "54.25", PINK, [["33.34%", "18.09"], ["33.33%", "18.08"], ["-", "-"], ["33.33%", "18.08"]], "54.25", { mark: false });
block("E", "F", 4, "Deborah", "80.55", PINK, [["30.00%", "24.17"], ["30.00%", "24.17"], ["10.00%", "8.06"], ["30.00%", "24.17"]], "80.55");
block("H", "I", 4, "Elisha", "64.26", PINK, [["30.00%", "19.28"], ["30.00%", "19.28"], ["10.00%", "6.43"], ["30.00%", "19.28"]], "64.26");
block("K", "L", 4, "Erica", "53", PINK, [[Q, "13.25"], [Q, "13.25"], [Q, "13.25"], [Q, "13.25"]], "53.00");
block("N", "O", 4, "Katie", "62.48", PINK, [["90.00%", "56.23"], ["10.00%", "6.25"], ["-", "-"], ["-", "-"]], "62.48", { mark: false, plainFrom: 2 });
block("Q", "R", 4, "Guy/Ryan", "80", PINK, [[Q, "20.00"], [Q, "20.00"], [Q, "20.00"], [Q, "20.00"]], "80.00");
block("T", "U", 4, "Rose", "82.89", PINK, [[Q, "20.72"], [Q, "20.72"], [Q, "20.72"], [Q, "20.72"]], "82.89");
block("B", "C", 12, "Cleaning", "287.5", BLUE, [[Q, "71.88"], [Q, "71.88"], ["-", "0.00"], ["-", "0.00"], [Q, "71.88"], [Q, "71.88"]], "287.50", { mark: false });
block("E", "F", 12, "Chris", "80", "bg-[#8ea9db]", [["35%", "28.00"], ["65%", "52.00"], ["", "0.00"], ["", "0.00"], ["", "0.00"], ["", "0.00"]], "80.00");
block("H", "I", 12, "Cliff", "33.49", YELLOW, [["50%", "16.75"], ["50%", "16.75"], ["", "0.00"], ["", "0.00"], ["", "0.00"], ["", "0.00"]], "33.49");
block("K", "L", 12, "", "3", YELLOW, [["22.5%", "0.68"], ["22.5%", "0.68"], ["10.0%", "0.30"], ["", "0.00"], ["22.5%", "0.68"], ["22.5%", "0.68"]], "3.00");
block("N", "O", 12, "On-Call", "250", YELLOW, [["99%", "247.50"], ["1%", "2.50"], ["", "0.00"], ["", "0.00"], ["", "0.00"], ["", "0.00"]], "250.00");
block("B", "C", 23, "No Bend or 20", "3", BLUE, [["35%", "1.05"], ["8%", "0.24"], ["23%", "0.69"], ["34%", "1.02"]], "3.00", { nameClass: "text-left text-[#ff0000]" });

function Cell({ cell, selected }) {
  const c = cell || {};
  const cls = ["relative overflow-visible whitespace-nowrap px-0.5 pt-0.5 pb-0 align-top"];
  cls.push(c.total ? "leading-[16px]" : "leading-[17px]");
  cls.push(c.align || "text-right");
  if (c.bold) cls.push("font-bold");
  if (c.fill) cls.push(c.fill);
  if (c.yellow) cls.push("bg-[#ffffcc]");
  cls.push(c.yellow || c.beforeFill ? "border-r border-r-[#ffffcc]" : "border-r border-r-[#dedede]");
  if (c.total) cls.push("border-b-3 border-double border-b-black");
  else if (c.last) cls.push("border-b border-b-black");
  else if (c.yellow) cls.push("border-b border-b-[#ffffcc]");
  else cls.push("border-b border-b-[#dedede]");
  return (
    <td colSpan={c.span || 1} className={cls.join(" ")}>
      {c.v}
      {c.frame && <span className="absolute -top-0.5 -right-px -bottom-px -left-0.5 border-2 border-black" />}
      {c.mark && <span className="absolute top-0 left-0 size-1.5 bg-[#008000] [clip-path:polygon(0_0,100%_0,0_100%)]" />}
      {selected && (
        <span className="absolute -top-0.5 -right-0.5 -bottom-0.5 -left-0.5 z-10 border-2 border-[#217346]">
          <span className="absolute -right-[3px] -bottom-[3px] size-[5px] bg-[#217346] ring-1 ring-white" />
        </span>
      )}
    </td>
  );
}

function Sheet() {
  const rows = Array.from({ length: 30 }, (_, i) => i + 1);
  return (
    <div className="flex min-h-0 flex-1 overflow-hidden">
      <div className="min-w-0 flex-1 overflow-hidden bg-white">
        <table className="w-full table-fixed border-separate border-spacing-0 font-['Lato',sans-serif] text-[13px] text-black">
          <colgroup>
            <col className="w-[26px]" />
            {columns.map(([, w], i) => (
              <col key={i} className={w} />
            ))}
          </colgroup>
          <thead>
            <tr className="h-5 bg-[#f0f0f0]">
              <th className="border-r border-b border-[#9b9b9b] p-0">
                <Svg w={12} className="mr-1 ml-auto" stroke="none" fill="#b2b2b2"><path d="M12 0v12H0z" /></Svg>
              </th>
              {columns.map(([c], i) => (
                <th
                  key={i}
                  className={"px-0 pt-0.5 pb-0 align-top font-normal " + (c === "H" ? "border-b-2 border-b-[#217346] bg-[#d2d2d2] leading-[16px] text-[#217346]" : "border-r border-b border-r-[#c0c0c0] border-b-[#9b9b9b] leading-[17px]")}
                >
                  {c}
                </th>
              ))}
            </tr>
          </thead>
          <tbody>
            {rows.map((r) => {
              let skip = 0;
              return (
                <tr key={r} className={tallRows.includes(r) ? "h-[21px]" : "h-5"}>
                  <th className={"border-b border-b-[#c0c0c0] px-0 pt-0.5 pb-0 align-top leading-[17px] font-normal " + (r === 6 ? "border-r-2 border-r-[#217346] bg-[#d2d2d2] text-[#217346]" : "border-r border-r-[#9b9b9b] bg-[#f0f0f0] text-[#222]")}>{r}</th>
                  {letters.map((l) => {
                    if (skip > 0) {
                      skip -= 1;
                      return null;
                    }
                    const cell = cells[l + r];
                    if (cell && cell.span) skip = cell.span - 1;
                    return <Cell key={l} cell={cell} selected={l === "H" && r === 6} />;
                  })}
                </tr>
              );
            })}
          </tbody>
        </table>
      </div>
      <div className="flex w-[21px] shrink-0 flex-col items-center bg-[#f4f4f4] pt-1">
        <Svg w={10} h={8} stroke="none" fill="#6e6e6e"><path d="M5 0l4.500 7.500h-9z" /></Svg>
        <div className="mt-1 flex w-full flex-1 flex-col items-center">
          <div className="h-[59%] w-[9px] rounded-full bg-[#6e6e6e]" />
        </div>
        <Svg w={10} h={8} stroke="none" fill="#6e6e6e" className="mb-0.5"><path d="M5 8 .5 .5h9z" /></Svg>
      </div>
    </div>
  );
}

function SheetTabs() {
  return (
    <div className="flex h-[31px] shrink-0 items-center border-t border-[#dcdcdc] pb-1 text-[#444]">
      <Btn label="Previous sheet" className="ml-[26px]"><Svg w={12} strokeWidth="1.300"><path d="M8 1.500 3.500 6 8 10.500" /></Svg></Btn>
      <Btn label="Next sheet" className="ml-5 text-[#999]"><Svg w={12} strokeWidth="1.300"><path d="M4 1.500 8.500 6 4 10.500" /></Svg></Btn>
      <Btn label="All sheets" className="ml-5"><Svg w={12} stroke="none" fill="#333"><path d="M0 4.500h3v3H0zM4.500 4.500h3v3h-3zM9 4.500h3v3H9z" /></Svg></Btn>
      <button type="button" className="-mt-px ml-[13px] flex h-7 w-[71px] justify-center self-start rounded-b-md bg-white text-[13px] font-semibold text-[#333]">
        <span className="h-[25px] border-b-2 border-[#107c41] leading-6">Monthly</span>
      </button>
      <span className="ml-1 h-5 w-px bg-[#ccc]" />
      <Btn label="New sheet" className="ml-10"><Svg w={12}><path d="M6 0v12M0 6h12" /></Svg></Btn>
      <Svg w={4} h={14} className="ml-auto" stroke="none" fill="#444"><path d="M1 2h2v2H1zM1 7h2v2H1zM1 12h2v2H1z" /></Svg>
      <div className="mr-5 ml-[15px] flex h-4 w-[528px] items-center rounded-full bg-[#f5f5f5] px-1">
        <Svg w={8} h={10} stroke="none" fill="#6e6e6e"><path d="M0 5l7.500-4.500v9z" /></Svg>
        <div className="ml-1 flex-1 pr-5"><div className="h-[9px] rounded-full bg-[#6e6e6e]" /></div>
        <Svg w={8} h={10} stroke="none" fill="#6e6e6e"><path d="M8 5 .5 .5v9z" /></Svg>
      </div>
    </div>
  );
}

function StatusBar() {
  return (
    <footer className="flex h-[22px] shrink-0 items-center border-t border-[#c6c6c6] bg-[#f4f4f4] text-[11px] text-[#444]">
      <span className="ml-3">Ready</span>
      <Svg w={14} className="mr-[5px] ml-[18px]" stroke="#333"><circle cx="6" cy="2" r="1.500" /><path d="M1 3.500c3 1.500 7 1.500 10 0M4 5v4l-2 4.500M8 5v2M4.500 9l1.500 4M8 8.500l5 5M13 8.500l-5 5" /></Svg>
      <span className="font-semibold">Accessibility: Investigate</span>
      <div className="ml-auto flex h-full items-center">
        <Btn label="Normal view" className="h-full w-10 bg-[#dedede]"><Svg w={13} stroke="#222"><path d="M.5 .5h12v12H.5zM.5 4.500h12M.5 8.500h12M4.500 .5v12M8.500 .5v12" /></Svg></Btn>
        <Btn label="Page layout view" className="w-10"><Svg w={13} stroke="#222"><path d="M.5 .5h12v12H.5zM3.500 2.500h6v8h-6zM5 5h3M5 6.500h3M5 8.500h3" /></Svg></Btn>
        <Btn label="Page break view" className="w-10"><Svg w={13} stroke="#222"><path d="M.5 .5h12v12H.5zM4.500 .5v7h4M8.500 .5v7" /></Svg></Btn>
        <Btn label="Zoom out" className="ml-1.5"><Svg w={8} stroke="#333"><path d="M0 4.500h8" /></Svg></Btn>
        <input
          type="range"
          aria-label="Zoom"
          defaultValue="50"
          className="mx-1 h-3 w-[102px] appearance-none bg-[linear-gradient(#777,#777)] bg-[length:100%_1px] bg-center bg-no-repeat [&::-webkit-slider-thumb]:h-2.5 [&::-webkit-slider-thumb]:w-1 [&::-webkit-slider-thumb]:appearance-none [&::-webkit-slider-thumb]:bg-[#555]"
        />
        <Btn label="Zoom in"><Svg w={8} stroke="#333"><path d="M0 4.500h8M4.500 0v8" /></Svg></Btn>
        <span className="mr-[19px] ml-[13px]">100%</span>
      </div>
    </footer>
  );
}

function ExcelWindow() {
  return (
    <section className="absolute top-[52px] right-[242px] bottom-[103px] left-[256px] flex flex-col overflow-hidden border border-t-0 border-[#107c41] bg-[#f0f0f0] shadow-[0_3px_9px_rgba(0,0,0,0.55)]">
      <ExcelTitle />
      <ExcelTabs />
      <Ribbon />
      <FormulaBar />
      <Sheet />
      <SheetTabs />
      <StatusBar />
    </section>
  );
}

/* ---------- taskbar ---------- */

const Letter = ({ x, y, size, children }) => (
  <text x={x} y={y} fontSize={size} fontWeight="700" fill="#fff" stroke="none" textAnchor="middle">{children}</text>
);

const icons = {
  outlook: (
    <>
      <path d="M8 2h14v12H8z" fill="#28a8ea" /><path d="M8 2h7v6H8z" fill="#0a64ad" /><path d="M5 11h18v11H7z" fill="#1490df" /><path d="M23 11v11H9z" fill="#50d9ff" />
      <rect y="6" width="12" height="12" rx="1" fill="#0364b8" /><Letter x={6} y={15.500} size={9}>O</Letter>
    </>
  ),
  teams: (
    <>
      <circle cx="13" cy="4" r="3.500" fill="#7b83eb" /><circle cx="20" cy="5" r="2.500" fill="#5059c9" /><path d="M8 9h12v7a6 6 0 0 1-12 0z" fill="#7b83eb" /><path d="M19 9h5v6a4 4 0 0 1-5 3z" fill="#5059c9" />
      <rect y="5" width="12" height="12" rx="1" fill="#4b53bc" /><Letter x={6} y={14.500} size={9}>T</Letter>
      <circle cx="18" cy="18" r="7" fill="#13a10e" /><path d="M14.500 18l2.500 2.500 4.500-4.500" stroke="#fff" strokeWidth="1.500" />
    </>
  ),
  sage: (
    <>
      <circle cx="12" cy="12" r="11" fill="#2fb34a" stroke="#e9f6ec" strokeWidth="1.500" /><path d="M8 7v10h8v-3.500M11.500 13.500 16 8M12.500 7.500h4v4" stroke="#fff" strokeWidth="1.500" />
    </>
  ),
  folder: (
    <>
      <path d="M1 3h8l2 2h11v15H1z" fill="#e9a820" /><path d="M1 7h21v13H1z" fill="#ffd869" /><path d="M5 20v-6h14v6h-4v-3H9v3z" fill="#3a8ee0" />
    </>
  ),
  snip: (
    <>
      <ellipse cx="11" cy="9" rx="10" ry="7" fill="#f2f2f2" transform="rotate(-25 11 9)" /><ellipse cx="12" cy="8" rx="7" ry="4" stroke="#d0343a" strokeWidth="2" transform="rotate(-25 12 8)" /><path d="M9 12l10 5M18 9l-4 9" stroke="#aaa" strokeWidth="1.500" /><circle cx="20" cy="19" r="2.500" stroke="#2b7fd0" strokeWidth="1.500" /><circle cx="14" cy="20.500" r="2.500" stroke="#2b7fd0" strokeWidth="1.500" />
    </>
  ),
  excel: (
    <>
      <path d="M6 2h18v20H6z" fill="#21a366" /><path d="M15 2h9v7h-9z" fill="#33c481" /><path d="M6 9h9v7H6z" fill="#107c41" /><path d="M15 16h9v6h-9z" fill="#185c37" />
      <rect y="5" width="13" height="13" rx="1" fill="#107c41" /><Letter x={6.500} y={15} size={10}>X</Letter>
    </>
  ),
  chrome: (
    <>
      <circle cx="12" cy="12" r="12" fill="#34a853" /><path d="M1.600 6A12 12 0 0 1 22.400 6L12 6z" fill="#ea4335" /><path d="M1.600 6 7 15l5-9h10.400A12 12 0 0 0 1.600 6z" fill="#ea4335" /><path d="M22.400 6A12 12 0 0 1 12 24l5.200-9V6z" fill="#fbbc05" />
      <circle cx="12" cy="12" r="5.500" fill="#4285f4" stroke="#fff" strokeWidth="1.500" />
    </>
  ),
  keeper: (
    <>
      <rect width="24" height="24" fill="#000" /><circle cx="12" cy="12" r="8.500" fill="#f5c542" /><path d="M7 6v12M9.500 3v18M12 3v8M12 13v8M18 6l-4.500 6 4.500 6M15 4l-1 4M15 20l-1-4" stroke="#000" strokeWidth="1.100" />
    </>
  ),
  acrobat: (
    <>
      <rect width="24" height="24" rx="4" fill="#0b1724" /><path d="M11.500 5.500c1.500 3-1 8.500-5.500 12 3.500-3 8-4 12-2.500-4-.5-7-5-6.500-9.500z" stroke="#fff" strokeWidth="1.500" />
    </>
  ),
  word: (
    <>
      <path d="M6 2h18v20H6z" fill="#2b7cd3" /><path d="M6 2h18v5H6z" fill="#41a5ee" /><path d="M6 17h18v5H6z" fill="#103f91" /><rect y="5" width="13" height="13" rx="1" fill="#185abd" /><Letter x={6.500} y={15} size={9}>W</Letter>
    </>
  ),
  gapp: (
    <>
      <rect x="1" y="1" width="22" height="22" rx="3" fill="#3b1a8f" /><path d="M15 8l-4-2-5 3v6l5 4 5-3v-4h-4" stroke="#fff" strokeWidth="1.500" /><circle cx="17" cy="7" r="2" fill="#d66cf0" />
    </>
  ),
};

const apps = [
  ["outlook", "Outlook", true], ["teams", "Teams", true], ["sage", "Sage 100 Contractor", true], ["folder", "File Explorer", true],
  ["snip", "Snipping Tool", false], ["excel", "Excel", true], ["chrome", "Chrome", true], ["keeper", "Keeper", false],
  ["acrobat", "Acrobat", true], ["word", "Word", true], ["gapp", "Assistant", true], ["", "Window", true],
];

const tray = [
  ["Keeper", <><circle cx="7" cy="8" r="7" fill="#e8b93a" stroke="none" /><path d="M3.500 3v10M6 1v14M8.500 1v6M8.500 9v6M13 4 10 8l3 4" stroke="#222" /><circle cx="12" cy="3" r="2.500" fill="#e33" stroke="none" /></>],
  ["D", <><rect width="16" height="16" fill="#2f3542" stroke="none" /><Letter x={8} y={12.500} size={12}>D</Letter></>],
  ["Teams", <g stroke="none"><circle cx="9" cy="3" r="2.500" fill="#7b83eb" /><path d="M6 5h9v5a4 4 0 0 1-9 0z" fill="#5059c9" /><rect y="3" width="9" height="9" fill="#4b53bc" /><Letter x={4.500} y={10.500} size={8}>T</Letter><circle cx="12" cy="12" r="4" fill="#6bb700" /></g>],
  ["Dropbox", <g stroke="none"><path d="M5 1l3 2-3 2-3-2zM11 1l3 2-3 2-3-2zM11 6l3 2-3 2-3-2z" fill="#fff" /><circle cx="4.500" cy="11" r="4.500" fill="#d7263d" /><Letter x={4.500} y={14} size={8}>1</Letter></g>],
  ["Sync", <><circle cx="8" cy="8" r="7" fill="#aaa" stroke="#ddd" /><path d="M11 5c-3-2-6-.5-5 1.500S11 8 11 10s-4 2.500-6 .5" stroke="#333" strokeWidth="1.500" /></>],
  ["Nx", <><path d="M2 12V2l6 10V2" stroke="#fff" strokeWidth="2.300" /><path d="M8 8l6 7M14 8l-6 7" stroke="#ccc" strokeWidth="1.800" /></>],
  ["Outlook", <g stroke="none"><path d="M5 1h10v14H5z" fill="#28a8ea" /><path d="M5 8h10v7z" fill="#1066b5" /><rect y="4" width="9" height="9" fill="#0a64c0" /><Letter x={4.500} y={11.500} size={8}>O</Letter></g>],
  ["USB", <path d="M5.500 5.500v-5h4v5M4.500 5.500h6v10h-6zM11 12l2 2 2-3" />],
  ["Security", <><path d="M7.500 0 14 2v6c0 3-3 6-6.500 7.500C4 14 1 11 1 8V2z" fill="#fff" stroke="none" /><path d="M7.500 0v15M1 7.500h13" stroke="#222" /><circle cx="12" cy="12" r="4.500" fill="#13a051" stroke="none" /><path d="M10 12l1.500 1.500L14 11" /></>],
  ["Power", <><path d="M4.500 4.500h11v7h-11zM1.500 2v3M3.500 2v3M.5 5.500h4M2.500 6v5h2" /><path d="M6 6h8v4H6z" fill="#fff" stroke="none" /></>],
  ["Network", <path d="M4.500 2.500h11v9h-11zM9.500 11.500v3M6 14.500h7M.5 1.500h4v4h-4zM2.500 5.500v9" />],
  ["Volume", <path d="M1 6h2l3-3.500v11L3 10H1zM8.500 6c1 1 1 3 0 4M10.500 4c2 2 2 6 0 8M13 2c3 3 3 9 0 12" />],
  ["Microphone", <><rect x="5.500" y="0" width="5" height="10" rx="2" fill="#fff" /><path d="M3.500 8v3h9V8M8 11v4M5 15.500h6" /></>],
];

function Taskbar() {
  return (
    <footer className="flex h-10 shrink-0 bg-[linear-gradient(90deg,#1b1b20_0%,#1f1d20_3%,#3b2e24_20%,#33251f_55%,#202020_68%,#222226_100%)] text-white">
      <Btn label="Start" className="w-12">
        <Svg w={16} stroke="none" fill="#fff"><path d="M0 2.300 6.500 1.400v6.100H0zM7.500 1.200 16 0v7.500H7.500zM0 8.500h6.500v6.100L0 13.700zM7.500 8.500H16V16l-8.500-1.200z" /></Svg>
      </Btn>
      <label className="flex w-[288px] shrink-0 items-center border-t border-[#c8c8c8] bg-[#f0f0f0] pl-3 text-[#222]">
        <Svg w={16} strokeWidth="1.300"><circle cx="10" cy="5.500" r="5" /><path d="M6.500 9.500 1 15.500" /></Svg>
        <input aria-label="Search Windows" placeholder="Type here to search" className="ml-3 w-[220px] bg-transparent text-[14px] outline-none placeholder:text-[#444]" />
      </label>
      <div className="ml-0.5 flex">
        {apps.map(([key, name, open]) => (
          <button type="button" key={name} aria-label={name} className={"flex w-[49px] flex-col items-center " + (key === "excel" ? "bg-[#58504a]" : "")}>
            <span className="flex flex-1 items-center">
              {key && <Svg w={24} stroke="none">{icons[key]}</Svg>}
            </span>
            <span className={"h-0.5 " + (open ? "bg-[#76b9ed] " : "") + (key === "excel" ? "w-full" : "w-10")} />
          </button>
        ))}
      </div>
      <div className="ml-auto flex items-center">
        {tray.map(([name, art]) => (
          <Btn key={name} label={name} className="w-8"><Svg w={16}>{art}</Svg></Btn>
        ))}
        <div className="w-[66px] text-center text-[11px] leading-[18px]">
          <div>1:27 PM</div>
          <div>8/5/2025</div>
        </div>
        <Btn label="Notifications" className="ml-1 w-9">
          <Svg w={28}>
            <path d="M2 4h16v13H9l-4 4v-4H2z" fill="#fff" stroke="none" /><path d="M5 8h10M5 11h10M5 14h6" stroke="#222" />
            <circle cx="18" cy="18" r="9" fill="#333" stroke="#888" /><Letter x={18} y={22} size={11}>20</Letter>
          </Svg>
        </Btn>
        <span className="ml-1.5 h-10 w-px bg-[#666]" />
        <span className="w-1" />
      </div>
    </footer>
  );
}

export default function App() {
  return (
    <main className="relative flex h-screen flex-col overflow-hidden font-['Open_Sans',sans-serif]">
      <PayrollWindow />
      <ExcelWindow />
      <Taskbar />
    </main>
  );
}
